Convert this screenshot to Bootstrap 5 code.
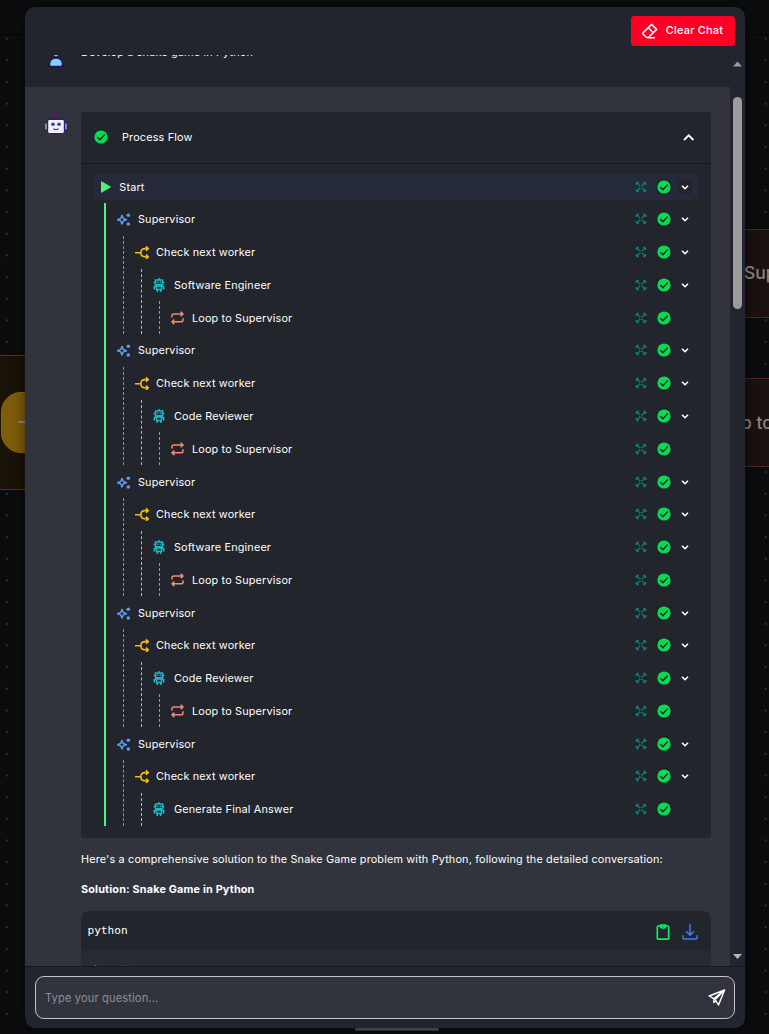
<!DOCTYPE html>
<html lang="en">
<head>
<meta charset="utf-8">
<meta name="viewport" content="width=device-width, initial-scale=1">
<title>Chat</title>
<link href="https://cdn.jsdelivr.net/npm/bootstrap@5.3.0/dist/css/bootstrap.min.css" rel="stylesheet">
<style>
body{font-family:Inter,"Liberation Sans",sans-serif;font-size:10.83px;letter-spacing:.17px;line-height:16px;color:#fff;background-color:#0b0c0e;height:1034px}
svg{display:block;flex:none}
.stage{height:1034px;background-image:radial-gradient(circle at 50% 50%,#303134 0 .9px,transparent 1.3px);background-size:21.68px 21.68px;background-position:-3.7px 27.8px}
.stage-top{height:35px;background:#0b0c0e;border-bottom:1px solid #050506}
.node{position:absolute;background:#1b110f;border:1.5px solid #4c2a1e;color:#8a8583;font:500 17.5px/1 Inter,sans-serif;letter-spacing:0;white-space:nowrap}
.node-gold{background:#191206;border-color:#4d390e;left:-20px;top:355px;width:100px;height:135px}
.gold-pill{position:absolute;left:20px;top:36px;width:90px;height:61px;border-radius:20px;background:#7d5c0a;border:1px solid #8a660c}
.gold-pill i{position:absolute;left:16px;top:28px;width:20px;height:2px;background:#8a8580}
.dock{position:absolute;left:355px;top:1027px;width:84px;height:4px;background:#555;border:1px solid #3a3a3a}
.chat-window{position:absolute;left:25px;top:7px;width:720px;height:1021px;background:#22252d;border-radius:10px;box-shadow:0 0 14px rgba(0,0,0,.5)}
.win-head{height:47.5px;padding:9px 10px 0}
.btn-clear{--bs-btn-bg:#ff0025;--bs-btn-color:#fff;--bs-btn-border-color:#ff0025;width:104px;height:30px;font-size:11px;font-weight:500;border-radius:3px;padding:0 1px 0 0;line-height:1;letter-spacing:.18px}
.messages{height:911.5px}
.user-msg{height:60px;margin-top:-27.5px;padding:16.5px 0 0 23px}
.user-text{margin:1.5px 0 0 17px}
.bot-msg{background:#32343d;height:900px;padding:25px 19px 0 20px}
.flow-box{background:#22252c;border-radius:3px;height:726px}
.flow-head{height:52px;border-bottom:1px solid #17191e;padding:0 15px 1px 14px}
.start-row{margin:10px 13px 0;height:26px;background:#242a3a;border-radius:4px;padding-left:7px}
.tree{margin:3px 13px 0 23px;border-left:2px solid #4bf47f}
.branch{margin-left:17px;border-left:1px dashed}
.step{height:32.77px;padding-left:10.7px}
.step-name{margin-left:7.3px;padding-top:2px}
.acts{margin-left:auto;padding-right:6px}
.acts>span{background:#22252c}
.c-sparkle{color:#5c9cf0}.c-split{color:#f9b912}.c-robot{color:#1fb7c5}.c-loop{color:#f58b6c}.c-zoomer{color:#0f8a84}
.b-sparkle{border-color:#5c9cf0}.b-split{border-color:#f9b912}.b-robot{border-color:#1fc7d5}
.code-box{background:#22252c;border-radius:8px 8px 0 0;height:120px}
.code-head{height:40px;padding:0 13px 0 6.5px;font-family:"DejaVu Sans Mono",monospace;font-size:11.1px;letter-spacing:0}
.code-head svg{position:relative;top:1px}
.code-body{background:#292b34;height:80px;padding:10.5px 11px;font-family:"DejaVu Sans Mono",monospace;font-size:11px;letter-spacing:0;color:#c36ad8}
.scroller{width:15px;background:#22252d}
.thumb{width:9px;height:212px;border-radius:5px;background:#9b9b9b;margin-top:30.4px}
.ask{border-top:1px solid #16181c;padding:9px 10px 0;height:62px}
.ask-box{height:43px;border:1px solid #c4c5c8;border-radius:9px;background:#32343d;padding:1px 8px 0 9px;color:#8d8f94;font-size:11.1px;letter-spacing:.14px}
</style>
</head>
<body class="overflow-hidden">
<svg width="0" height="0" class="position-absolute">
<defs>
<symbol id="i-ok" viewBox="0 0 14 14"><circle cx="7" cy="7" r="6.6" fill="#06db52"/><path d="M3.4 7.2 5.9 9.7l4.9-5.3" fill="none" stroke="#22252c" stroke-width="1.4"/></symbol>
<symbol id="i-sparkle" viewBox="0 0 14 14"><path d="M5 3.4 6.3 6.5 9.4 7.7 6.3 8.9 5 12 3.7 8.9.6 7.7 3.7 6.5Z" fill="none" stroke="currentColor" stroke-width="1.5" stroke-linejoin="round"/><circle cx="11.3" cy="3.3" r="1.8" fill="currentColor"/><circle cx="11.3" cy="12" r="1.8" fill="currentColor"/></symbol>
<symbol id="i-split" viewBox="0 0 14 14"><path d="M0 7.700h5.700M13 3.600h-3C7 3.600 5.900 5.700 5.900 7.700s1.100 4.100 4.100 4.100h3M11 1.400l2.200 2.200L11 5.800M11 9.600l2.200 2.200L11 14" fill="none" stroke="currentColor" stroke-width="1.6"/></symbol>
<symbol id="i-robot" viewBox="0 0 14 14"><path d="M6 0v2M2.500 2h7v4.800h-7zM1.500 3.400v2M10.500 3.400v2M3.500 8h5v3.500h-5zM3.500 8.500H1.300v3M8.500 8.500h2.200v3M4.300 11.500V14M7.700 11.500V14" fill="none" stroke="currentColor" stroke-width="1.5"/><path d="M3.900 3.600h1.400V5H3.900zM6.700 3.600h1.400V5H6.700z" fill="currentColor"/></symbol>
<symbol id="i-loop" viewBox="0 0 14 14"><path d="M1 6.600V4.800Q1 3 2.800 3h9M9.700.7 12 3 9.700 5.300M12 7.200V9q0 1.800-1.800 1.800H1.300M3.300 8.500 1 10.800l2.300 2.300" fill="none" stroke="currentColor" stroke-width="1.5"/></symbol>
<symbol id="i-zoomer" viewBox="0 0 12 12"><path d="m2 2 2.600 2.600m2.800 2.800L10 10m0-8L7.400 4.600M4.600 7.400 2 10" stroke="currentColor" stroke-width="1.2"/><path d="M1.300 3.900V2.200h.9v-.9h1.700M8.100 1.300h1.700v.9h.9v1.700M10.700 8.100v1.700h-.9v.9H8.100M3.900 10.700H2.200v-.9h-.9V8.100" fill="none" stroke="currentColor" stroke-width="1.1"/><path d="M4.600 4.600h2.800v2.800H4.600z" fill="none" stroke="currentColor" stroke-width=".9" stroke-dasharray="1 .8"/></symbol>
<symbol id="i-down" viewBox="0 0 14 14"><path d="m4 5.700 3 3 3-3" fill="none" stroke="#fff" stroke-width="1.6"/></symbol>
</defs>
</svg>
<div class="stage position-relative overflow-hidden">
  <div class="stage-top"></div>
  <div class="node node-gold"><div class="gold-pill"><i></i></div></div>
  <div class="node" style="left:700px;top:229px;width:100px;height:89px;padding:34px 0 0 43px">Supervisor</div>
  <div class="node" style="left:650px;top:378px;width:150px;height:89px;padding:35px 0 0 59px">Loop to Supervisor</div>
  <div class="dock"></div>

  <main class="chat-window overflow-hidden d-flex flex-column">
    <header class="win-head d-flex justify-content-end">
      <button class="btn btn-clear d-flex align-items-center justify-content-center gap-2">
        <svg width="16" height="16" viewBox="0 0 16 16" fill="none" stroke="#fff" stroke-width="1.5" stroke-linejoin="round"><path d="M9.600 1.400 14.600 6.400 6.500 14.500H4.500L1.200 11.200q-.8-.8 0-1.600ZM6.300 4.800l5 5M6.200 14.700H13"/></svg><span class="pb-1" style="margin-bottom:-2px">Clear Chat</span></button>
    </header>
    <div class="messages d-flex overflow-hidden">
      <section class="flex-grow-1 overflow-hidden">
        <div class="user-msg d-flex">
          <svg width="16" height="24" viewBox="0 0 16 24"><path d="M1.500 20.500c0-3.500 2-6.500 6.500-6.500s6.500 3 6.500 6.500q0 2-2 2H3.500q-2 0-2-2Z" fill="#7fd0ff" stroke="#280f5e" stroke-width="1.400"/><circle cx="8" cy="9" r="3.400" fill="#fff" stroke="#280f5e" stroke-width="1"/></svg>
          <span class="user-text">Develop a snake game in Python</span>
        </div>
        <div class="bot-msg d-flex">
          <svg width="24" height="24" viewBox="0 0 24 24"><path d="M11 3v4" stroke="#321a70" stroke-width="2"/><circle cx="11" cy="2.600" r="1.600" fill="#d2005a" stroke="#321a70"/><rect x="-.4" y="11" width="3.400" height="7" rx="1.200" fill="#8b85b5" stroke="#321a70"/><rect x="19" y="11" width="3.400" height="7" rx="1.200" fill="#8b85b5" stroke="#321a70"/><rect x="2.600" y="7.300" width="16.800" height="14.200" rx="1.800" fill="#eef1fc" stroke="#321a70" stroke-width="1.200"/><circle cx="8" cy="12.300" r="1.800" fill="#4b3b8a"/><circle cx="14" cy="12.300" r="1.800" fill="#4b3b8a"/><path d="M8.300 16.700q2.700 1.700 5.400 0" fill="none" stroke="#4b3b8a" stroke-width="1.200"/></svg>
          <article class="flex-grow-1" style="margin-left:12px">
            <div class="flow-box">
              <div class="flow-head d-flex align-items-center">
                <svg width="14" height="14" style="margin-left:-1px"><use href="#i-ok"/></svg><span style="margin-left:14px;padding-top:2px">Process Flow</span>
                <svg class="ms-auto" width="14" height="14" viewBox="0 0 14 14"><path d="m2 10 4.700-4.700L11.400 10" fill="none" stroke="#fff" stroke-width="1.800"/></svg>
              </div>
              <div class="start-row d-flex align-items-center" id="start">
                <svg width="11" height="12" viewBox="0 0 11 12"><path d="M0 0 10.300 6 0 12Z" fill="#4bf47f"/></svg><span class="step-name">Start</span>
              </div>
              <div class="tree" id="tree"></div>
            </div>
            <p class="mb-0" style="margin-top:14px">Here's a comprehensive solution to the Snake Game problem with Python, following the detailed conversation:</p>
            <p class="fw-bold mb-0" style="margin-top:14px">Solution: Snake Game in Python</p>
            <div class="code-box overflow-hidden" style="margin-top:13px">
              <div class="code-head d-flex align-items-center">python
                <svg class="ms-auto" width="16" height="18" viewBox="0 0 16 18" fill="none" stroke="#0cec6b" stroke-width="1.700"><rect x="2.300" y="3" width="11.400" height="13.200" rx="1"/><path d="M5.600 2h4.800v1.500q0 1.500-1.500 1.500H7.100Q5.600 5 5.600 3.500Z"/></svg>
                <svg style="margin-left:11px" width="16" height="18" viewBox="0 0 16 18" fill="none" stroke="#3580f6" stroke-width="1.500"><path d="M8 1v11M4 8.300l4 4 4-4M1 12.300v2.500q0 1.200 1.200 1.200h11.600q1.200 0 1.200-1.200v-2.500"/></svg>
              </div>
              <div class="code-body">import</div>
            </div>
          </article>
        </div>
      </section>
      <aside class="scroller d-flex flex-column align-items-center">
        <svg style="margin-top:6px" width="9" height="6"><path d="M0 5.500 4.500.5 9 5.500Z" fill="#9b9b9b"/></svg>
        <div class="thumb"></div>
        <svg class="mt-auto" style="margin-bottom:7px" width="9" height="5"><path d="M0 0h9L4.500 5Z" fill="#b5b5b5"/></svg>
      </aside>
    </div>
    <footer class="ask">
      <div class="ask-box d-flex align-items-center">Type your question...
        <svg class="ms-auto" width="18" height="18" viewBox="0 0 18 18" fill="none" stroke="#fff" stroke-width="1.400" stroke-linejoin="round"><path d="M16.600 1 1.200 7 5.800 9.700ZM16.600 1 10.500 16 7.200 10.600ZM5.800 9.700v3.800l2.200-2"/></svg>
      </div>
    </footer>
  </main>
</div>
<script src="https://cdn.jsdelivr.net/npm/bootstrap@5.3.0/dist/js/bootstrap.bundle.min.js"></script>
<script>
const icon = (name, size) => `<svg class="c-${name}" width="${size}" height="${size}"><use href="#i-${name}"/></svg>`;
const actions = open => `<div class="acts d-flex align-items-center">${icon('zoomer', 12)}<span style="margin-left:10.300px">${icon('ok', 14)}</span><span class="${open ? '' : 'invisible'}" style="margin-left:6.700px">${icon('down', 14)}</span></div>`;
const kinds = ['sparkle', 'split', 'robot', 'loop'];
function branch(names, depth) {
  const more = depth < names.length - 1;
  return `<div class="step d-flex align-items-center">${icon(kinds[depth], 14)}<span class="step-name">${names[depth]}</span>${actions(more)}</div>` +
    (more ? `<div class="branch b-${kinds[depth]}">${branch(names, depth + 1)}</div>` : '');
}
const workers = ['Software Engineer', 'Code Reviewer', 'Software Engineer', 'Code Reviewer', 'Generate Final Answer'];
document.getElementById('start').insertAdjacentHTML('beforeend', actions(true));
document.getElementById('tree').innerHTML = workers.map((w, i) =>
  branch(['Supervisor', 'Check next worker', w].concat(i < 4 ? ['Loop to Supervisor'] : []), 0)).join('');
</script>
</body>
</html>
